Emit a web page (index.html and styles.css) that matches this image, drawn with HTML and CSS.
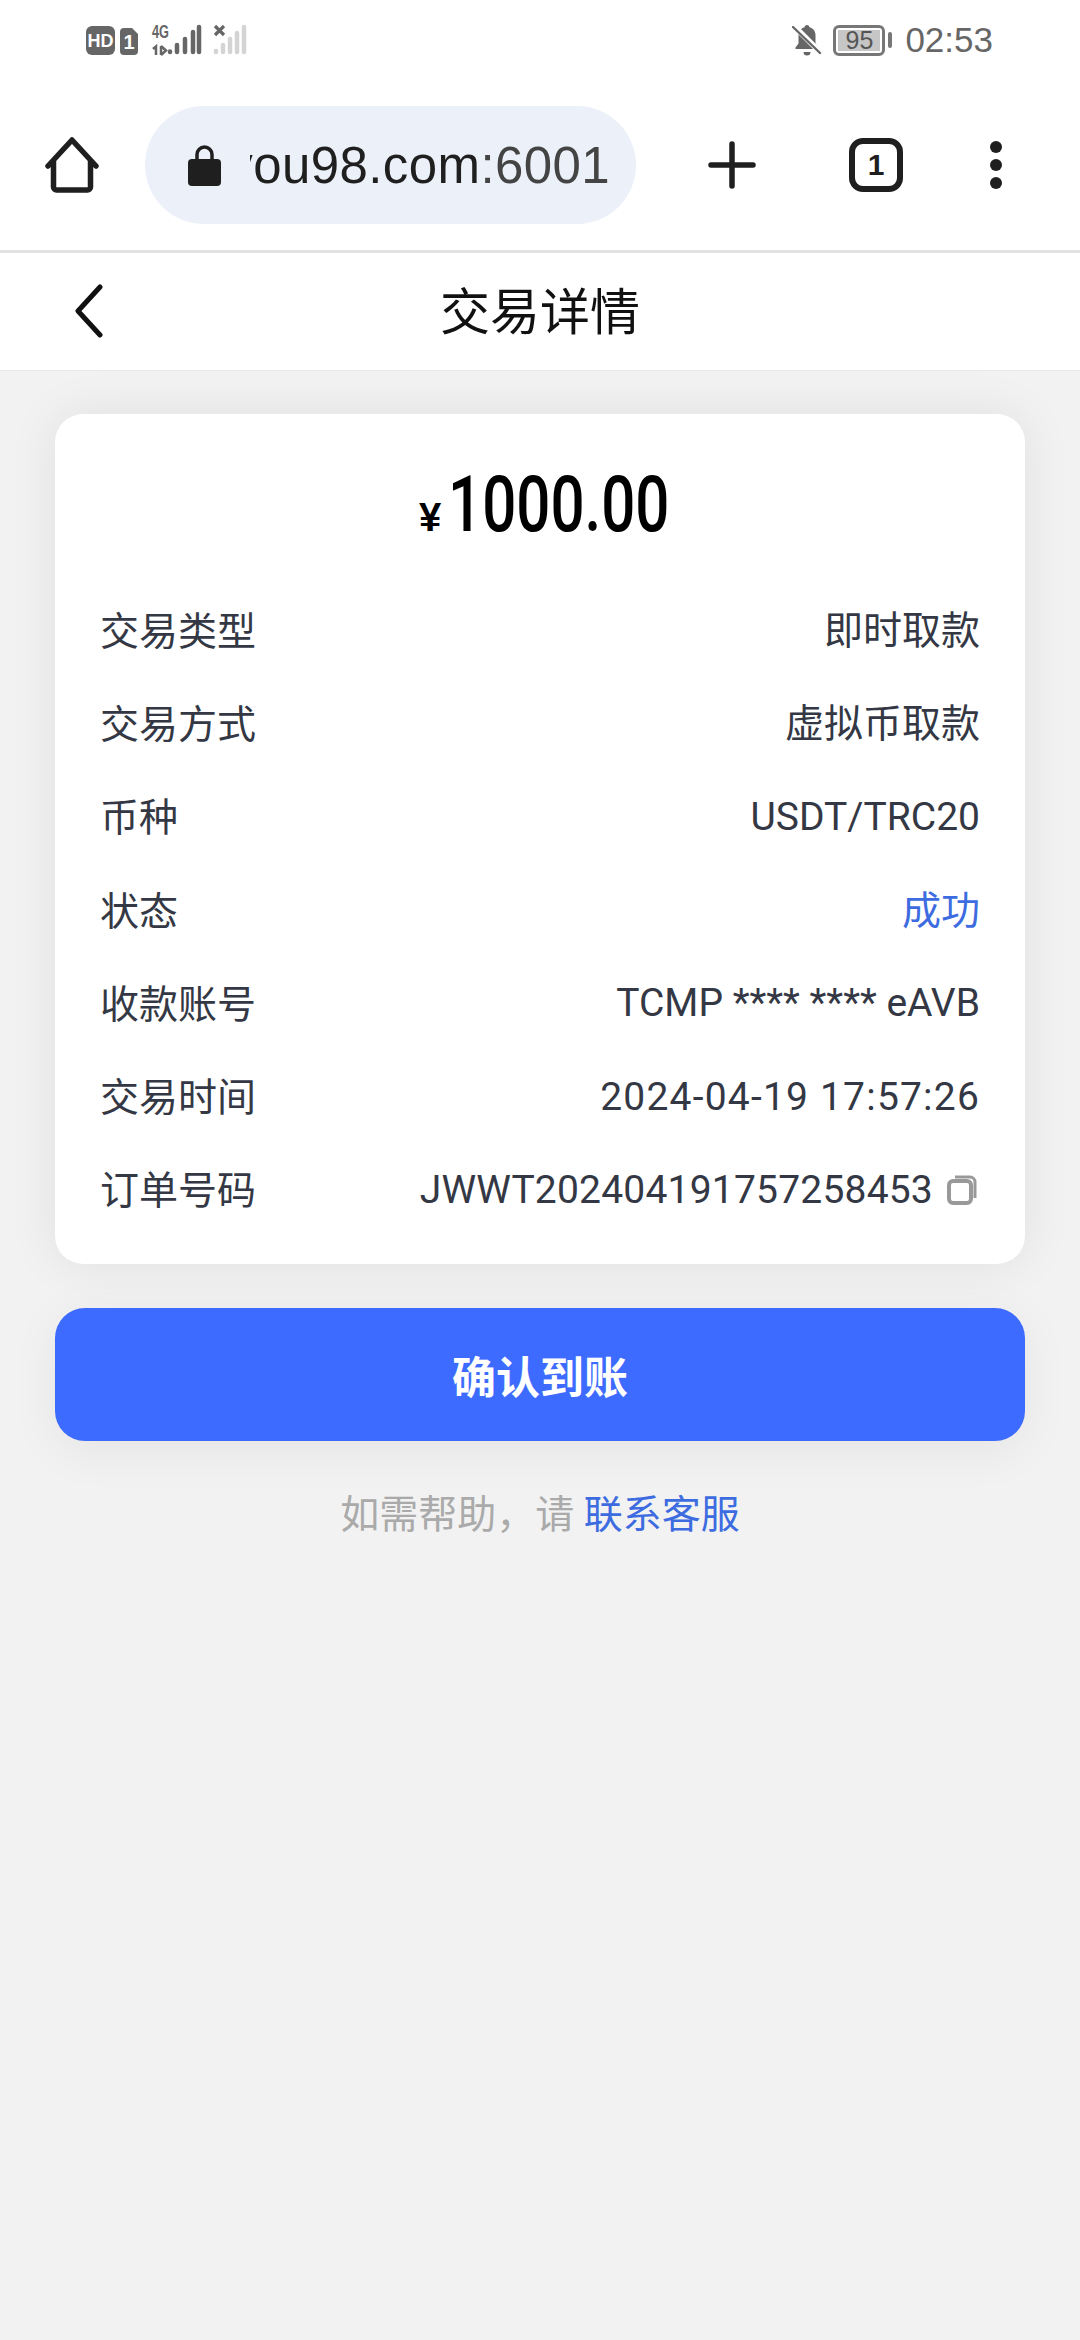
FILE: index.html
```html
<!doctype html>
<html>
<head>
    <title>交易详情</title>
    <link rel="stylesheet" href="styles.css">
</head>
<body>
    <div class="status-bar">
        <div class="status-left">
            <svg width="52" height="30" viewBox="0 0 52 30">
                <rect x="0" y="1" width="29" height="29" rx="6" fill="#666"/>
                <text x="14.500" y="22" class="hd-text" text-anchor="middle">HD</text>
                <path d="M38 3h8l6 6v17a4 4 0 0 1-4 4h-10a4 4 0 0 1-4-4v-19a4 4 0 0 1 4-4z" fill="#666"/>
                <text x="43" y="23.500" class="sim-text" text-anchor="middle">1</text>
            </svg>
            <svg class="signal-one" width="50" height="32" viewBox="0 0 50 32">
                <text x="0" y="14" class="net-text" textLength="17" lengthAdjust="spacingAndGlyphs">4G</text>
                <path d="M1 25l3-2.500V31M9 22v9M9 22l5 4.500-5 4.500" fill="none" stroke="#666" stroke-width="2.500"/>
                <g stroke="#666" stroke-width="4.500" stroke-linecap="round">
                    <path d="M18 27.500v.5"/><path d="M25 21v7"/><path d="M33 15v13"/><path d="M41 8v20"/><path d="M47 3v25"/>
                </g>
            </svg>
            <svg class="signal-two" width="34" height="32" viewBox="0 0 34 32">
                <path d="M2 2l9 9M11 2l-9 9" stroke="#666" stroke-width="3.200"/>
                <g stroke="#d4d4d4" stroke-width="4.500" stroke-linecap="round">
                    <path d="M3 27v1"/><path d="M10 21v7"/><path d="M17 15v13"/><path d="M24 9v19"/><path d="M31 3v25"/>
                </g>
            </svg>
        </div>
        <div class="status-right">
            <svg width="30" height="32" viewBox="0 0 30 32">
                <path d="M15 1c-1.500 0-2.400 1-2.500 2.300-4 1.100-6 4.300-6 8.200v8l-3 4v1.500h23v-1.500l-3-4v-8c0-3.900-2-7.100-6-8.200-.1-1.300-1-2.300-2.500-2.300zM11.500 28a3.500 3.500 0 0 0 7 0z" fill="#666"/>
                <path d="M2 2l26 26" stroke="#fff" stroke-width="5.500"/>
                <path d="M1 3l27 26" stroke="#666" stroke-width="2.400" stroke-linecap="round"/>
            </svg>
            <div class="battery">
                <div class="battery-body"><span class="battery-level">95</span></div>
                <div class="battery-tip"></div>
            </div>
            <span class="clock">02:53</span>
        </div>
    </div>

    <div class="toolbar">
        <svg class="home-icon" width="54" height="56" viewBox="0 0 54 56">
            <path d="M3 29L27 3l24 26M8.500 23.500V50a3 3 0 0 0 3 3h31a3 3 0 0 0 3-3V23.500" fill="none" stroke="#1f1f1f" stroke-width="5.500" stroke-linecap="round" stroke-linejoin="round"/>
        </svg>
        <div class="url-bar">
            <svg class="lock-icon" width="33" height="42" viewBox="0 0 33 42">
                <path d="M9 18v-7.500a7.500 7.500 0 0 1 15 0V18" fill="none" stroke="#1f1f1f" stroke-width="3.500"/>
                <rect x="0" y="15" width="33" height="27" rx="4" fill="#1f1f1f"/>
            </svg>
            <div class="url-text"><span>you98.com</span><span class="url-port">:6001</span></div>
        </div>
        <svg class="plus-icon" width="48" height="48" viewBox="0 0 48 48">
            <path d="M3 24h42M24 3v42" stroke="#1f1f1f" stroke-width="5.500" stroke-linecap="round"/>
        </svg>
        <div class="tab-count">1</div>
        <div class="more-icon"><i></i><i></i><i></i></div>
    </div>

    <div class="page-header">
        <svg class="back-icon" width="30" height="54" viewBox="0 0 30 54">
            <path d="M26 3L4 27l22 24" fill="none" stroke="#111" stroke-width="5" stroke-linecap="round" stroke-linejoin="round"/>
        </svg>
        <div class="page-title">交易详情</div>
    </div>

    <div class="content">
        <div class="detail-card">
            <div class="amount"><span class="currency">¥</span><span class="amount-num">1000.00</span></div>
            <div class="detail-row"><span class="detail-label">交易类型</span><span class="detail-value">即时取款</span></div>
            <div class="detail-row"><span class="detail-label">交易方式</span><span class="detail-value">虚拟币取款</span></div>
            <div class="detail-row"><span class="detail-label">币种</span><span class="detail-value latin-value">USDT/TRC20</span></div>
            <div class="detail-row"><span class="detail-label">状态</span><span class="detail-value status-ok">成功</span></div>
            <div class="detail-row"><span class="detail-label">收款账号</span><span class="detail-value latin-value">TCMP **** **** eAVB</span></div>
            <div class="detail-row"><span class="detail-label">交易时间</span><span class="detail-value latin-value date-value">2024-04-19 17:57:26</span></div>
            <div class="detail-row">
                <span class="detail-label">订单号码</span>
                <span class="detail-value latin-value order-no">JWWT202404191757258453
                    <svg class="copy-icon" width="30" height="30" viewBox="0 0 30 30">
                        <path d="M8 2h15a5 5 0 0 1 5 5v16" fill="none" stroke="#999" stroke-width="3"/>
                        <rect x="2" y="6" width="22" height="22" rx="4" fill="#fff" stroke="#999" stroke-width="4"/>
                    </svg>
                </span>
            </div>
        </div>
        <button class="confirm-btn">确认到账</button>
        <div class="help-text">如需帮助，请 <span class="help-link">联系客服</span></div>
    </div>
</body>
</html>
```

FILE: styles.css
```css
* {
    box-sizing: border-box;
}
body {
    font-family: Roboto, "Noto Sans CJK SC", sans-serif;
    margin: 0;
    width: 1080px;
    height: 2340px;
    overflow: hidden;
    display: flex;
    flex-direction: column;
    background-color: #f2f2f2;
}
.status-bar {
    height: 80px;
    padding: 0 87px 0 86px;
    background-color: white;
    display: flex;
    align-items: center;
    justify-content: space-between;
}
.status-left {
    display: flex;
    align-items: center;
}
.status-left svg {
    overflow: visible;
}
.signal-one {
    margin-left: 14px;
}
.signal-two {
    margin-left: 11px;
}
.hd-text {
    font-family: "Liberation Sans", sans-serif;
    font-size: 18px;
    font-weight: bold;
    fill: white;
}
.sim-text {
    font-family: "Liberation Sans", sans-serif;
    font-size: 20px;
    font-weight: bold;
    fill: white;
}
.net-text {
    font-family: "Liberation Sans", sans-serif;
    font-size: 19px;
    font-weight: bold;
    fill: #666;
}
.status-right {
    display: flex;
    align-items: center;
}
.battery {
    display: flex;
    align-items: center;
    gap: 3px;
    margin-left: 11px;
}
.battery-body {
    width: 52px;
    height: 31px;
    border: 3px solid #777;
    border-radius: 6px;
    padding: 2px;
    display: flex;
}
.battery-level {
    flex: 1;
    background-color: #c6c6c6;
    color: #555;
    font-family: "Liberation Sans", sans-serif;
    font-size: 25px;
    line-height: 21px;
    text-align: center;
}
.battery-tip {
    width: 4px;
    height: 16px;
    border-radius: 2px;
    background-color: #777;
}
.clock {
    margin-left: 13px;
    color: #666;
    font-family: "Liberation Sans", sans-serif;
    font-size: 35px;
}
.toolbar {
    height: 173px;
    background-color: white;
    border-bottom: 3px solid #e2e2e2;
    padding-left: 45px;
    display: flex;
    align-items: center;
}
.toolbar > * {
    flex-shrink: 0;
}
.url-bar {
    width: 491px;
    height: 118px;
    margin-left: 46px;
    padding: 0 26px 0 43px;
    border-radius: 59px;
    background-color: #ebf0f9;
    display: flex;
    align-items: center;
}
.lock-icon {
    flex-shrink: 0;
}
.url-text {
    flex: 1;
    min-width: 0;
    margin-left: 29px;
    overflow: hidden;
    display: flex;
    justify-content: flex-end;
    white-space: nowrap;
    font-family: "Liberation Sans", sans-serif;
    font-size: 51px;
    letter-spacing: 0.400px;
    color: #1f1f1f;
}
.url-text span {
    flex-shrink: 0;
}
.url-port {
    color: #444;
}
.plus-icon {
    margin-left: 72px;
}
.tab-count {
    width: 54px;
    height: 54px;
    margin-left: 93px;
    border: 6px solid #1f1f1f;
    border-radius: 14px;
    color: #1f1f1f;
    font-family: "Liberation Sans", sans-serif;
    font-size: 30px;
    font-weight: bold;
    line-height: 42px;
    text-align: center;
}
.more-icon {
    margin-left: 87px;
    display: flex;
    flex-direction: column;
    gap: 6px;
}
.more-icon i {
    width: 12px;
    height: 12px;
    border-radius: 50%;
    background-color: #1f1f1f;
}
.page-header {
    height: 118px;
    padding-bottom: 8px;
    background-color: white;
    border-bottom: 1px solid #e8e8e8;
    position: relative;
    display: flex;
    align-items: center;
    justify-content: center;
}
.back-icon {
    position: absolute;
    left: 74px;
    top: 31px;
}
.page-title {
    font-size: 50px;
    color: #111;
}
.content {
    flex: 1;
    padding: 43px 55px 0;
    display: flex;
    flex-direction: column;
}
.detail-card {
    height: 850px;
    padding: 0 45px;
    background-color: white;
    border-radius: 28px;
    box-shadow: 0 0 50px rgba(0,0,0,0.08);
}
.amount {
    height: 168px;
    padding-left: 4px;
    display: flex;
    align-items: baseline;
    justify-content: center;
    color: black;
    line-height: 183px;
}
.currency {
    font-family: "Liberation Sans", sans-serif;
    font-size: 40px;
    font-weight: bold;
}
.amount-num {
    width: 217px;
    margin-left: 7px;
    font-size: 77px;
    font-weight: 500;
    transform: scaleX(0.78);
    transform-origin: left center;
    white-space: nowrap;
}
.detail-row {
    height: 93.200px;
    padding-bottom: 1px;
    display: flex;
    align-items: center;
    justify-content: space-between;
    font-size: 39px;
}
.detail-label {
    color: #343844;
}
.detail-value {
    margin-bottom: 2px;
    color: #343844;
}
.latin-value {
    margin: 5px 0 0;
}
.status-ok {
    color: #3d6be0;
}
.date-value {
    letter-spacing: 1.200px;
}
.order-no {
    display: flex;
    align-items: center;
    gap: 14px;
    letter-spacing: 0.200px;
}
.copy-icon {
    margin-right: 3px;
}
.confirm-btn {
    height: 133px;
    margin-top: 44px;
    border: none;
    border-radius: 30px;
    background-color: #3d6bff;
    color: white;
    font-family: Roboto, "Noto Sans CJK SC", sans-serif;
    font-size: 44px;
    font-weight: bold;
    box-shadow: 0 10px 50px rgba(0,0,0,0.06);
}
.help-text {
    margin-top: 42px;
    text-align: center;
    font-size: 39px;
    color: #aaa;
}
.help-link {
    color: #3d6be0;
}
```
